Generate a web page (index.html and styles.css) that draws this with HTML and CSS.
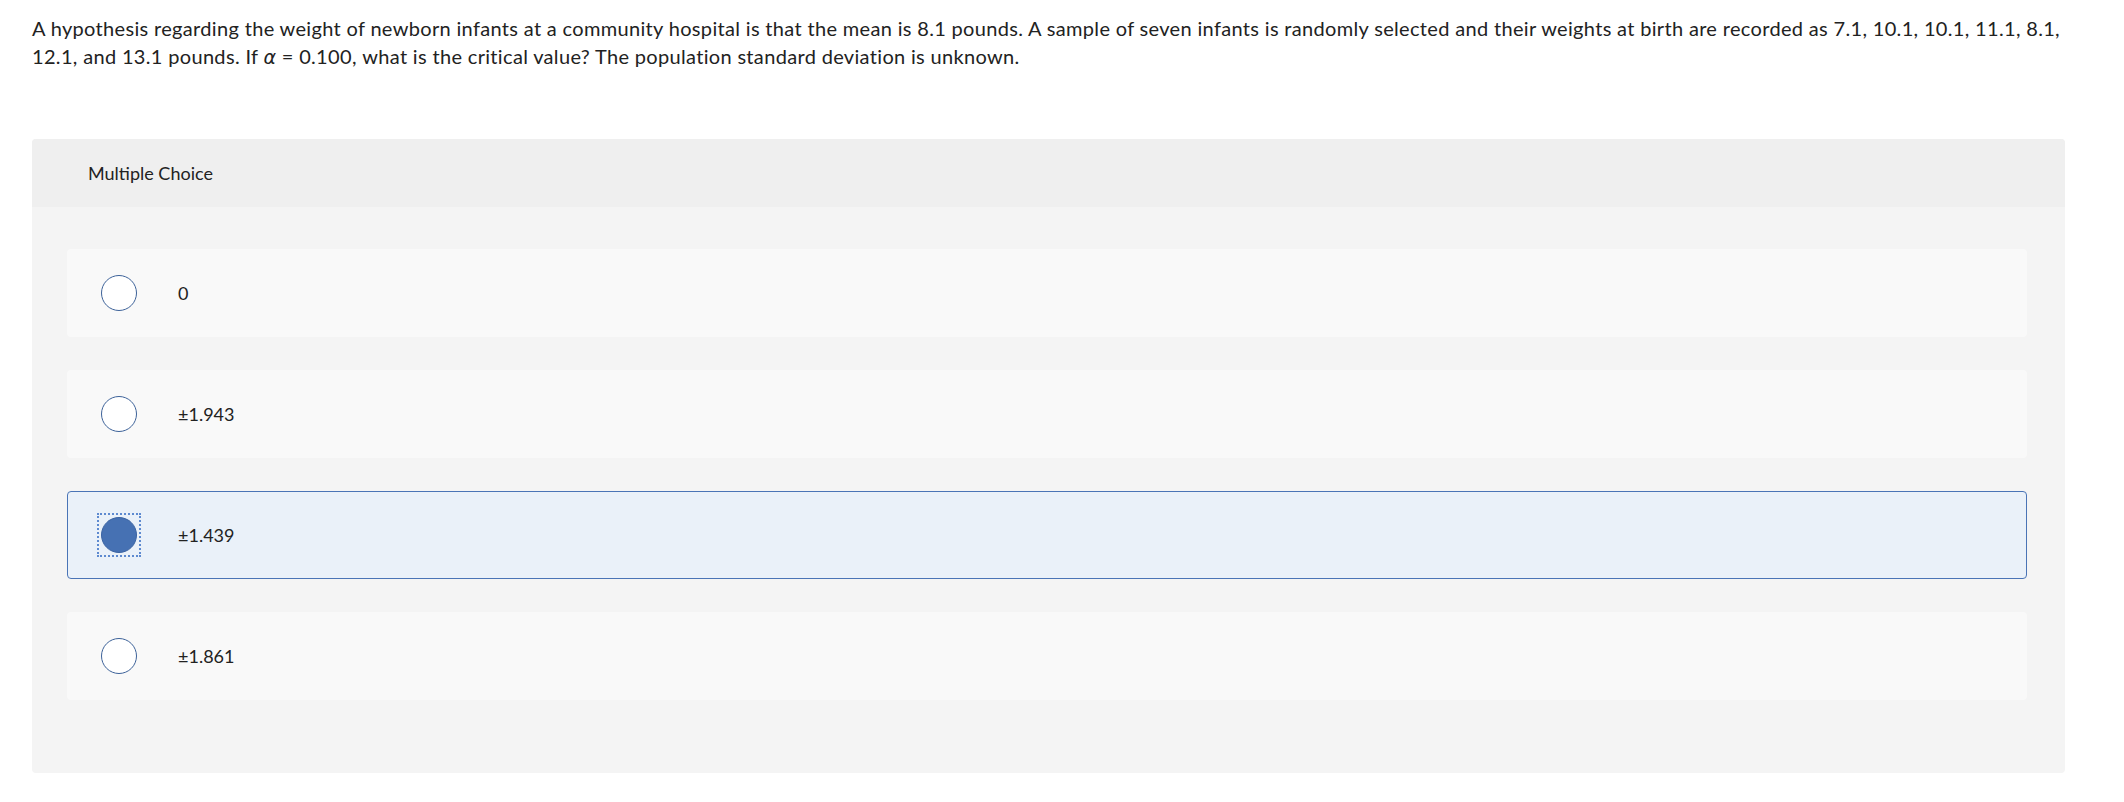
FILE: index.html
```html
<!DOCTYPE html>
<html lang="en">
<head>
<meta charset="utf-8">
<title>Multiple Choice</title>
<link rel="stylesheet" href="styles.css">
</head>
<body>
<main class="page">
  <p class="question">A hypothesis regarding the weight of newborn infants at a community hospital is that the mean is 8.1 pounds. A sample of seven infants is randomly selected and their weights at birth are recorded as 7.1, 10.1, 10.1, 11.1, 8.1,<br>12.1, and 13.1 pounds. If <i class="alpha">α</i> = 0.100, what is the critical value? The population standard deviation is unknown.</p>

  <section class="panel">
    <header class="panel-header">Multiple Choice</header>
    <div class="choices">
      <label class="choice">
        <span class="radio"></span>
        <span class="choice-text">0</span>
      </label>
      <label class="choice">
        <span class="radio"></span>
        <span class="choice-text">±1.943</span>
      </label>
      <label class="choice selected">
        <span class="radio checked"></span>
        <span class="choice-text">±1.439</span>
      </label>
      <label class="choice">
        <span class="radio"></span>
        <span class="choice-text">±1.861</span>
      </label>
    </div>
  </section>
</main>
</body>
</html>
```

FILE: styles.css
```css
* { box-sizing: border-box; }

html, body {
  margin: 0;
  padding: 0;
  background: #ffffff;
}

body {
  font-family: "Lato", "Open Sans", sans-serif;
  color: #222222;
}

.page {
  padding: 14px 0 0 32px;
}

.question {
  margin: 0;
  font-size: 20px;
  line-height: 28px;
  letter-spacing: 0.33px;
  white-space: nowrap;
  color: #222222;
}

.alpha {
  font-family: "DejaVu Sans", sans-serif;
  font-style: italic;
  font-size: 19px;
}

.panel {
  margin-top: 68px;
  width: 2033px;
  background: #f4f4f4;
  border-radius: 4px;
  overflow: hidden;
}

.panel-header {
  height: 68px;
  display: flex;
  align-items: center;
  padding-left: 56px;
  background: #efefef;
  font-size: 18px;
  color: #222222;
}

.choices {
  display: flex;
  flex-direction: column;
  gap: 33px;
  padding: 42px 38px 73px 35px;
}

.choice {
  height: 88px;
  display: flex;
  align-items: center;
  padding-left: 33px;
  background: #f9f9f9;
  border: 1px solid transparent;
  border-radius: 4px;
  font-size: 18px;
  color: #222222;
}

.choice.selected {
  background: #eaf1f9;
  border-color: #4a74b6;
}

.radio {
  flex: none;
  width: 36px;
  height: 36px;
  border-radius: 50%;
  border: 1px solid #3d6299;
  background: #ffffff;
}

.radio.checked {
  position: relative;
  background: #4671b3;
  border-color: #3a63a3;
}

.radio.checked::after {
  content: "";
  position: absolute;
  top: -5px;
  left: -5px;
  right: -5px;
  bottom: -5px;
  border: 2px dotted #5e8ad0;
}

.choice-text {
  margin-left: 41px;
}
```
